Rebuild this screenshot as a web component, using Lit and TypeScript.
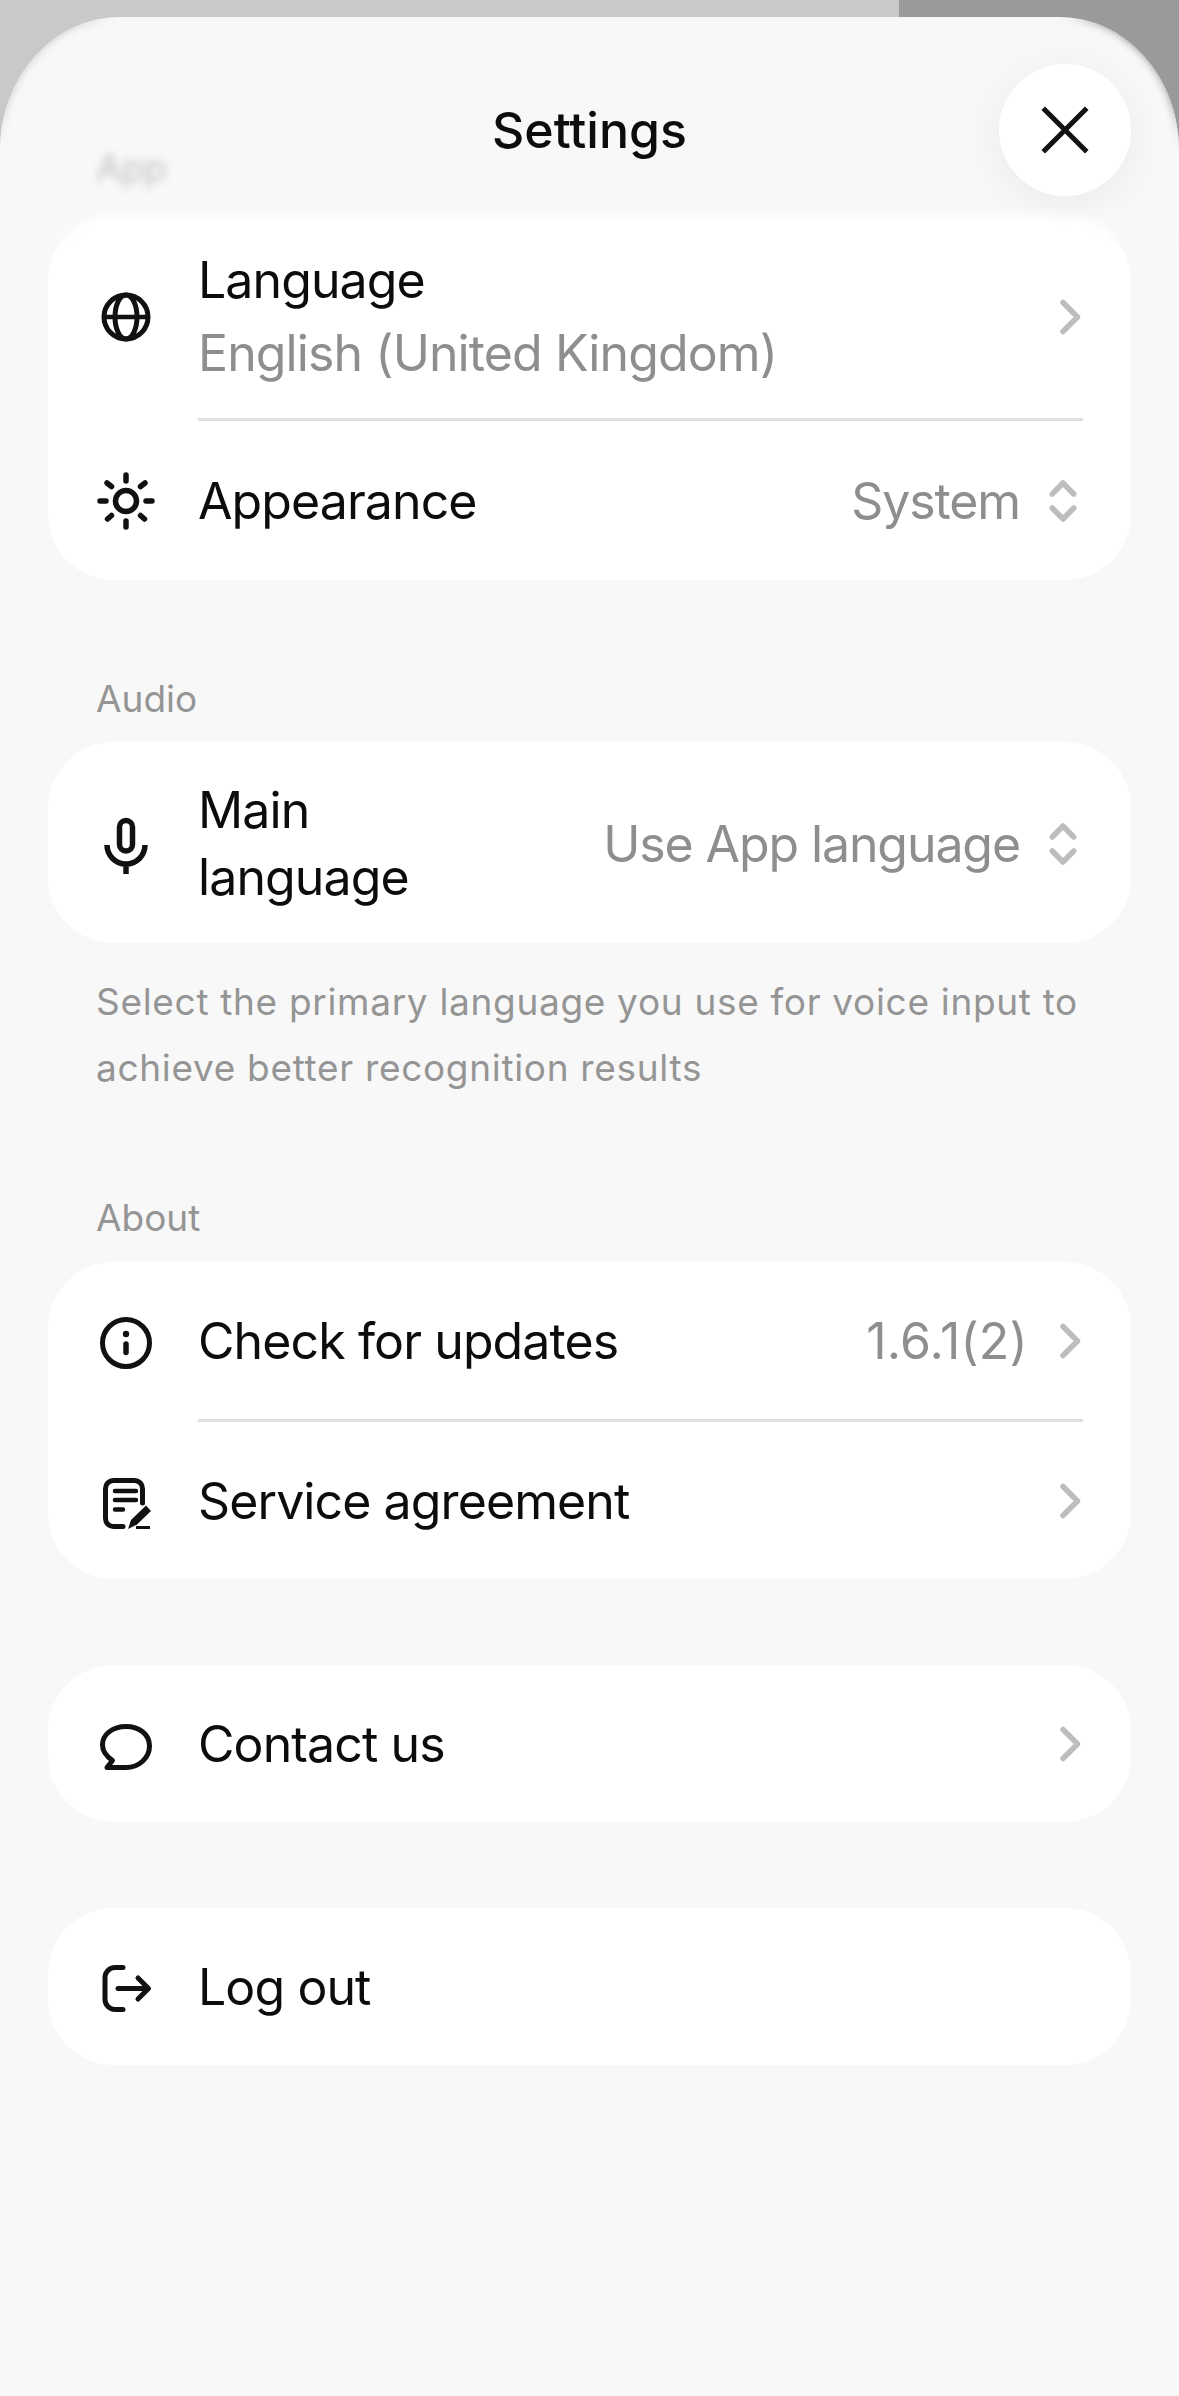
import { LitElement, html, css, svg } from 'lit';
import { customElement } from 'lit/decorators.js';

const icon = (body: unknown) => html`<svg class="icon" viewBox="0 0 60 60" fill="none" stroke="#111" stroke-width="5" stroke-linecap="round" stroke-linejoin="round">${body}</svg>`;

const globe = icon(svg`<circle cx="30" cy="30" r="22"/><ellipse cx="30" cy="30" rx="11" ry="22"/><path d="M8 30h44" stroke-linecap="butt" stroke-width="4.500"/>`);
const sun = icon(svg`<circle cx="30" cy="30" r="10.500" stroke-width="5.500"/><path d="M30 4v6M30 50v6M4 30h6M50 30h6M11 12l4.500 3.500M49 12l-4.500 3.500M11.500 48l4-3.500M48.500 48l-4-3.500" stroke-width="5.500"/>`);
const mic = icon(svg`<rect x="23.500" y="6.500" width="13" height="30.500" rx="6.500" stroke-width="5.500"/><path d="M11 31a19 19 0 0 0 38 0M30 50v10" stroke-linecap="butt" stroke-width="5.500"/>`);
const info = icon(svg`<circle cx="30" cy="32" r="23.500"/><path d="M30 33v8.500" stroke-width="5.500"/><circle cx="30" cy="23" r="3.200" fill="#111" stroke="none"/>`);
const doc = icon(svg`<path d="M27 55.500H17.500a8 8 0 0 1-8-8v-30a8 8 0 0 1 8-8h21a8 8 0 0 1 8 8V32"/><path d="M19 20h21M19 29h21M19 38.500h8" stroke-width="4.500"/><path d="M32 58l3-9 15-14.500 5 5.500-14 13.500z" fill="#111" stroke="none"/><path d="M40 56.500h14" stroke-width="3" stroke-linecap="butt"/>`);
const chat = icon(svg`<path d="M11 53.500l5.500-7C10 42 6.500 36.500 6.500 31c0-11 10.500-18.500 23.500-18.500S53.500 20 53.500 32 43 53.500 30 53.500z"/>`);
const logout = icon(svg`<path d="M27 10.500H19a10 10 0 0 0-10 10v22a10 10 0 0 0 10 10h8"/><path d="M22 31.500h30M42 21l10.500 10.500L42 42"/>`);

const chevron = html`<svg class="chev" viewBox="0 0 26 40" fill="none" stroke="#bdbdbd" stroke-width="5.500" stroke-linecap="round" stroke-linejoin="round"><path d="M6 5.500L20.500 20 6 34.500"/></svg>`;
const updown = html`<svg class="updown" viewBox="0 0 36 46" fill="none" stroke="#bdbdbd" stroke-width="5.500" stroke-linecap="round" stroke-linejoin="round"><path d="M7.250 16L18 5l10.750 11M7.250 30L18 41l10.750-11"/></svg>`;

@customElement('app-root')
export class AppRoot extends LitElement {
  static styles = css`
    :host {
      display: block;
      width: 1179px;
      height: 2396px;
      overflow: hidden;
      font-family: Inter, "Liberation Sans", sans-serif;
      background: linear-gradient(90deg, #c9c9c9 899px, #9a9a9a 899px);
    }
    .sheet {
      position: relative;
      margin-top: 17px;
      height: 2379px;
      box-sizing: border-box;
      padding: 129px 48px 0;
      background: #f8f8f8;
      border-radius: 120px 120px 0 0 / 133px 133px 0 0;
      overflow: hidden;
    }
    .head {
      position: absolute;
      top: 0;
      left: 0;
      right: 0;
      height: 225px;
      display: flex;
      justify-content: center;
      backdrop-filter: blur(4px);
      -webkit-mask-image: linear-gradient(#000 85%, transparent);
      mask-image: linear-gradient(#000 85%, transparent);
    }
    .title {
      margin-top: 81px;
      font-size: 50px;
      line-height: 64px;
      font-weight: 500;
      color: #0c0c0c;
    }
    .close {
      position: absolute;
      top: 47px;
      left: 999px;
      width: 132px;
      height: 132px;
      border-radius: 50%;
      background: #fff;
      box-shadow: 0 8px 44px rgba(0, 0, 0, 0.06);
      display: flex;
      align-items: center;
      justify-content: center;
    }
    .close svg {
      width: 48px;
      height: 48px;
    }
    .label {
      margin: 97px 48px 21px;
      font-size: 37px;
      line-height: 44px;
      color: #959595;
    }
    .label.first {
      margin-top: 0;
      margin-bottom: 25px;
      opacity: 0.55;
    }
    .card {
      background: #fff;
      border-radius: 66px;
      overflow: hidden;
    }
    .card + .card {
      margin-top: 86px;
    }
    .row {
      display: flex;
      align-items: center;
      height: 157px;
      padding: 0 48px;
      font-size: 50px;
      letter-spacing: -0.9px;
      color: #0c0c0c;
    }
    .row.tall {
      height: 203px;
    }
    .row.look {
      height: 159px;
    }
    .row.main {
      height: 199px;
      padding-top: 2px;
    }
    .rule {
      height: 3px;
      margin: 0 48px 0 150px;
      background: #e0e0e0;
    }
    .icon {
      width: 60px;
      height: 60px;
      flex: none;
      margin-right: 42px;
      overflow: visible;
    }
    .text {
      flex: 1;
      min-width: 0;
    }
    .sub {
      color: #8e8e8e;
    }
    .two {
      line-height: 73px;
    }
    .narrow {
      flex: none;
      width: 200px;
      line-height: 67px;
    }
    .value {
      color: #8e8e8e;
      white-space: nowrap;
      letter-spacing: -1.1px;
    }
    .value.version {
      letter-spacing: 0.2px;
    }
    .chev {
      width: 26px;
      height: 40px;
      flex: none;
      margin-left: 29px;
    }
    .updown {
      width: 36px;
      height: 46px;
      flex: none;
      margin-left: 25px;
      margin-right: 2px;
    }
    .spacer {
      flex: 1;
    }
    .note {
      margin: 26px 48px 0;
      font-size: 37px;
      line-height: 66px;
      letter-spacing: 0.68px;
      color: #959595;
    }
    .about {
      margin-top: 95px;
      margin-bottom: 22px;
    }
  `;

  render() {
    return html`
      <div class="sheet">
        <div class="label first">App</div>
        <div class="card">
          <div class="row tall">
            ${globe}
            <div class="text two">Language<div class="sub">English (United Kingdom)</div></div>
            ${chevron}
          </div>
          <div class="rule"></div>
          <div class="row look">
            ${sun}
            <div class="text">Appearance</div>
            <span class="value">System</span>${updown}
          </div>
        </div>

        <div class="label">Audio</div>
        <div class="card">
          <div class="row main">
            ${mic}
            <div class="narrow">Main language</div>
            <div class="spacer"></div>
            <span class="value">Use App language</span>${updown}
          </div>
        </div>
        <div class="note">Select the primary language you use for voice input to achieve better recognition results</div>

        <div class="label about">About</div>
        <div class="card">
          <div class="row">
            ${info}
            <div class="text">Check for updates</div>
            <span class="value version">1.6.1(2)</span>${chevron}
          </div>
          <div class="rule"></div>
          <div class="row">
            ${doc}
            <div class="text">Service agreement</div>
            ${chevron}
          </div>
        </div>

        <div class="card">
          <div class="row">
            ${chat}
            <div class="text">Contact us</div>
            ${chevron}
          </div>
        </div>

        <div class="card">
          <div class="row">
            ${logout}
            <div class="text">Log out</div>
          </div>
        </div>

        <div class="head">
          <div class="title">Settings</div>
          <div class="close">
            <svg viewBox="0 0 48 48" fill="none" stroke="#111" stroke-width="5" stroke-linecap="square"><path d="M4 4l40 40M44 4L4 44"/></svg>
          </div>
        </div>
      </div>
    `;
  }
}
